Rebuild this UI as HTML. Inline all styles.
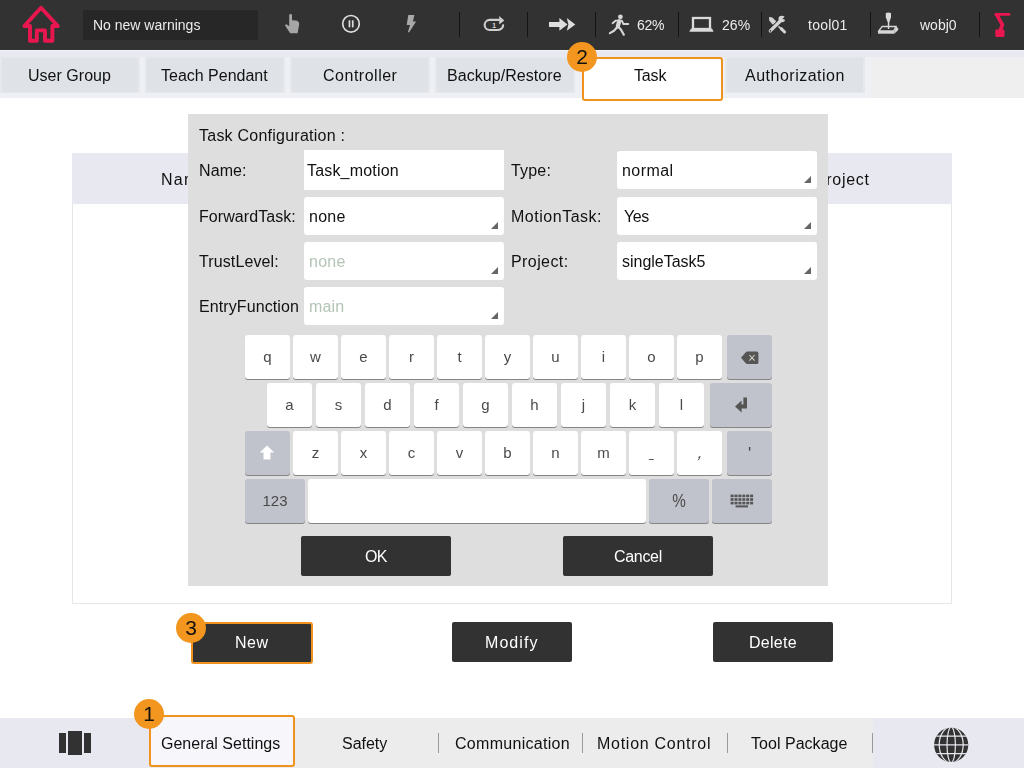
<!DOCTYPE html>
<html lang="en"><head><meta charset="utf-8"><title>Task Configuration</title>
<style>
html,body{margin:0;padding:0;}
body{width:1024px;height:768px;position:relative;overflow:hidden;background:#fff;font-family:"Liberation Sans", sans-serif;font-size:15px;color:#111;}
.abs{position:absolute;}
.t{position:absolute;white-space:nowrap;line-height:20px;height:20px;will-change:transform;}
.sep{position:absolute;width:1px;background:#141414;top:12px;height:25px;}
.tab{position:absolute;top:57px;height:36px;width:140px;background:#dfe3e8;box-sizing:border-box;border:2px solid #e5e8ed;border-top-width:1px;border-bottom-width:1px;}
.key{position:absolute;height:44px;width:45px;background:#fff;border-radius:3px;box-shadow:0 1px 0 #858585;}
.key.g{background:#c0c2cc;}
.kl{position:absolute;left:0;right:0;top:0;height:44px;line-height:44px;text-align:center;font-size:15px;color:#4a4a4a;will-change:transform;}
.inp{position:absolute;background:#fff;width:200px;}
.sel{position:absolute;background:#fff;width:200px;height:38px;border-radius:3px;}
.sel:after{content:"";position:absolute;right:6px;bottom:6px;width:0;height:0;border-left:7.5px solid transparent;border-bottom:7px solid #666;}
.btn{position:absolute;background:#323232;border-radius:2px;height:40px;}
.badge{position:absolute;width:30px;height:30px;border-radius:50%;background:#f2961f;color:#111;will-change:transform;font-size:21px;line-height:30px;text-align:center;}
.bsep{position:absolute;width:1px;background:#9a9a9a;top:733px;height:20px;}
</style></head><body>

<div class="abs" style="left:0;top:0;width:1024px;height:50px;background:#323232"></div>
<div class="abs" style="left:83px;top:10px;width:175px;height:30px;background:#272727"></div>
<svg class="abs" style="left:20px;top:3px" width="44" height="44" viewBox="0 0 44 44">
<path d="M16.8,37.7 H10 V23 H4.4 L21,4.8 L37.8,23 H32.4 V37.7 H25 V27.4 H16.8 Z" fill="none" stroke="#e9174f" stroke-width="3.9" stroke-linejoin="round" stroke-linecap="round"/>
</svg>
<div class="sep" style="left:459px"></div>
<div class="sep" style="left:527px"></div>
<div class="sep" style="left:595px"></div>
<div class="sep" style="left:678px"></div>
<div class="sep" style="left:761px"></div>
<div class="sep" style="left:870px"></div>
<div class="sep" style="left:979px"></div>
<svg class="abs" style="left:283px;top:12px" width="20" height="24" viewBox="0 0 20 24">
<path d="M6.2,3.2 Q6.2,2 7.6,2 Q9,2 9,3.2 V8.2 L13,8.6 Q16.5,9.6 16.2,12.2 L14.6,21.2 H7.2 L2.2,13.8 Q1.7,12.2 3.5,12.3 L6.2,14.2 Z" fill="#a6a6a6"/>
</svg>
<svg class="abs" style="left:339px;top:12px" width="24" height="24" viewBox="0 0 24 24">
<circle cx="12" cy="11.8" r="8.3" fill="none" stroke="#dcdcdc" stroke-width="1.7"/>
<rect x="9.6" y="8.3" width="1.7" height="7" fill="#dcdcdc"/><rect x="12.9" y="8.3" width="1.7" height="7" fill="#dcdcdc"/>
</svg>
<svg class="abs" style="left:403px;top:13px" width="16" height="22" viewBox="0 0 16 22">
<path d="M5.3,2 H11.4 L9.9,8.6 H13.1 L6.2,19.3 H4.9 L7,12 H3.7 Z" fill="#a8a8a8"/>
</svg>
<svg class="abs" style="left:481px;top:13px" width="26" height="22" viewBox="0 0 26 22">
<path d="M18.5,6.9 H8.7 A5.05,5.05 0 0 0 8.7,17 H17.1 A5.05,5.05 0 0 0 22.1,11.4" fill="none" stroke="#cfcfcf" stroke-width="2.1"/>
<path d="M18.2,3.1 L23.3,7.4 L18.2,11.4 Z" fill="#cfcfcf"/>
<text x="13.2" y="14.8" font-family="Liberation Sans, sans-serif" font-size="7.5" font-weight="bold" fill="#cfcfcf" text-anchor="middle">1</text>
</svg>
<svg class="abs" style="left:547px;top:15px" width="30" height="18" viewBox="0 0 30 18">
<path d="M2,7 H12.4 V3 L20.5,9.4 L12.4,15.8 V11.9 H2 Z" fill="#dedede"/>
<path d="M19.8,3 L28.3,9.4 L19.8,15.8 L21.4,9.4 Z" fill="#dedede"/>
</svg>
<svg class="abs" style="left:606px;top:12px" width="26" height="26" viewBox="0 0 26 26">
<circle cx="14.4" cy="4.8" r="2.4" fill="#d6d6d6"/>
<path d="M6.6,11.2 L9.8,8.6 H15.8 L17.4,12 H22.2" fill="none" stroke="#d6d6d6" stroke-width="1.9" stroke-linecap="round" stroke-linejoin="round"/>
<path d="M13.2,9.2 L11.8,14.4" fill="none" stroke="#d6d6d6" stroke-width="4.2" stroke-linecap="round"/>
<path d="M11.4,15 L8,18.8 L3.9,21.1" fill="none" stroke="#d6d6d6" stroke-width="2.2" stroke-linecap="round" stroke-linejoin="round"/>
<path d="M12.2,14.4 L15.2,18 L17.8,22.7" fill="none" stroke="#d6d6d6" stroke-width="2.2" stroke-linecap="round" stroke-linejoin="round"/>
</svg>
<svg class="abs" style="left:687px;top:15px" width="30" height="20" viewBox="0 0 30 20">
<rect x="6" y="3" width="17" height="11" fill="none" stroke="#dadada" stroke-width="2.3"/>
<path d="M4,13.6 H25 L26.6,16.7 H2.3 Z" fill="#dadada"/>
</svg>
<svg class="abs" style="left:765px;top:13px" width="24" height="24" viewBox="0 0 24 24">
<path d="M4,4 L7.4,4.4 L11.4,8.4 L8,12 L4.2,7.6 Z" fill="#d4d4d4"/>
<path d="M9.2,9.4 L19.4,19" stroke="#d4d4d4" stroke-width="1.5" stroke-linecap="round" fill="none"/>
<path d="M16.2,15.6 L19.6,19" stroke="#d4d4d4" stroke-width="3" stroke-linecap="round" fill="none"/>
<path d="M5.3,17.9 L16.6,6.8" stroke="#323232" stroke-width="5" stroke-linecap="butt" fill="none"/><path d="M5.3,17.9 L16.6,6.8" stroke="#d4d4d4" stroke-width="3.3" stroke-linecap="round" fill="none"/>
<circle cx="16.8" cy="6" r="3.3" fill="#d4d4d4"/>
<path d="M17.4,5.8 L21,2.8 L21.4,7.4 Z" fill="#323232"/>
<circle cx="5.4" cy="17.9" r="0.8" fill="#323232"/>
</svg>
<svg class="abs" style="left:875px;top:11px" width="26" height="26" viewBox="0 0 26 26">
<path d="M10.8,1.9 Q13.4,1.2 16,1.9 V6.6 L14.3,11 H12.7 L10.8,6.6 Z" fill="#dadada"/>
<rect x="12.8" y="10" width="1.5" height="8" fill="#dadada"/>
<path d="M7.2,15.5 H21 L18.6,19.8 H3.8 Z" fill="none" stroke="#d6d6d6" stroke-width="1.3"/>
<path d="M3,20 H19.4 V22.7 H3 Z" fill="#d6d6d6"/>
<path d="M21.2,15.2 L23.2,17.4 V19 L19.4,22.7 V20 Z" fill="#d6d6d6"/>
</svg>
<svg class="abs" style="left:990px;top:10px" width="24" height="30" viewBox="0 0 24 30">
<rect x="4.5" y="2.9" width="15.8" height="2.9" rx="1" fill="#ea1650"/>
<path d="M6.9,4.8 L12.4,14.8 L10.2,20.4" fill="none" stroke="#ea1650" stroke-width="3.7" stroke-linejoin="round" stroke-linecap="round"/>
<rect x="5.3" y="19.4" width="9.2" height="7.5" rx="1.2" fill="#ea1650"/>
</svg>
<span class="t" id="t0" style="left:92.67px;top:15.00px;font-size:14px;color:#ececec;letter-spacing:0.00px;">No new warnings</span>
<span class="t" id="t1" style="left:636.81px;top:15.00px;font-size:14px;color:#ececec;letter-spacing:-0.28px;">62%</span>
<span class="t" id="t2" style="left:721.55px;top:15.00px;font-size:14px;color:#ececec;letter-spacing:0.04px;">26%</span>
<span class="t" id="t3" style="left:808.20px;top:15.00px;font-size:14px;color:#ececec;letter-spacing:0.24px;">tool01</span>
<span class="t" id="t4" style="left:919.81px;top:15.00px;font-size:14px;color:#ececec;letter-spacing:-0.01px;">wobj0</span>
<div class="abs" style="left:0;top:50px;width:1024px;height:48px;background:#efefef"></div>
<div class="abs" style="left:0;top:50px;width:1024px;height:7px;background:#e8e8f0;border-top:1px solid #f4f4f8;box-sizing:border-box"></div>
<div class="abs" style="left:0;top:57px;width:871px;height:41px;background:#eef0f4"></div>
<div class="tab" style="left:0px"></div>
<div class="tab" style="left:145px"></div>
<div class="tab" style="left:290px"></div>
<div class="tab" style="left:435px"></div>
<div class="tab" style="left:725px"></div>
<div class="abs" style="left:582px;top:57px;width:137px;height:40px;background:#fff;border:2px solid #f0921d;border-radius:3px"></div>
<div class="badge" style="left:567px;top:42px">2</div>
<span class="t" id="t5" style="left:27.62px;top:66.00px;font-size:16px;color:#111;letter-spacing:0.02px;">User Group</span>
<span class="t" id="t6" style="left:160.81px;top:66.00px;font-size:16px;color:#111;letter-spacing:-0.01px;">Teach Pendant</span>
<span class="t" id="t7" style="left:322.90px;top:66.00px;font-size:16px;color:#111;letter-spacing:0.51px;">Controller</span>
<span class="t" id="t8" style="left:446.73px;top:66.00px;font-size:16px;color:#111;letter-spacing:0.06px;">Backup/Restore</span>
<span class="t" id="t9" style="left:633.72px;top:66.00px;font-size:16px;color:#111;letter-spacing:-0.15px;">Task</span>
<span class="t" id="t10" style="left:745.10px;top:66.00px;font-size:16px;color:#111;letter-spacing:0.50px;">Authorization</span>
<div class="abs" style="left:72px;top:153px;width:878px;height:449px;border:1px solid #e6e6e6;background:#fff"></div>
<div class="abs" style="left:72px;top:153px;width:880px;height:51px;background:#e8e8f0"></div>
<span class="t" id="t11" style="left:161.05px;top:170.00px;font-size:16px;color:#111;letter-spacing:1.27px;">Name</span>
<span class="t" id="t12" style="left:385.54px;top:170.00px;font-size:16px;color:#111;letter-spacing:-0.65px;">Type</span>
<span class="t" id="t13" style="left:578.71px;top:170.00px;font-size:16px;color:#111;letter-spacing:0.51px;">MotionTask</span>
<span class="t" id="t14" style="left:815.11px;top:170.00px;font-size:16px;color:#111;letter-spacing:0.68px;">Project</span>
<div class="abs" style="left:188px;top:114px;width:640px;height:472px;background:#dedede"></div>
<span class="t" id="t15" style="left:199.04px;top:126.00px;font-size:16px;color:#111;letter-spacing:0.24px;">Task Configuration :</span>
<div class="inp" style="left:304px;top:150px;height:40px"></div>
<div class="sel" style="left:304px;top:197px"></div>
<div class="sel" style="left:304px;top:242px"></div>
<div class="sel" style="left:304px;top:287px"></div>
<div class="sel" style="left:617px;top:151px"></div>
<div class="sel" style="left:617px;top:197px"></div>
<div class="sel" style="left:617px;top:242px"></div>
<span class="t" id="t16" style="left:198.55px;top:161.00px;font-size:16px;color:#111;letter-spacing:0.10px;">Name:</span>
<span class="t" id="t17" style="left:198.70px;top:207.00px;font-size:16px;color:#111;letter-spacing:0.07px;">ForwardTask:</span>
<span class="t" id="t18" style="left:199.31px;top:252.00px;font-size:16px;color:#111;letter-spacing:0.11px;">TrustLevel:</span>
<span class="t" id="t19" style="left:198.69px;top:297.00px;font-size:16px;color:#111;letter-spacing:0.10px;">EntryFunction</span>
<span class="t" id="t20" style="left:511.34px;top:161.00px;font-size:16px;color:#111;letter-spacing:0.18px;">Type:</span>
<span class="t" id="t21" style="left:510.60px;top:207.00px;font-size:16px;color:#111;letter-spacing:0.52px;">MotionTask:</span>
<span class="t" id="t22" style="left:510.57px;top:252.00px;font-size:16px;color:#111;letter-spacing:0.41px;">Project:</span>
<span class="t" id="t23" style="left:307.36px;top:161.00px;font-size:16px;color:#111;letter-spacing:0.18px;">Task_motion</span>
<span class="t" id="t24" style="left:309.05px;top:207.00px;font-size:16px;color:#111;letter-spacing:0.26px;">none</span>
<span class="t" id="t25" style="left:309.05px;top:252.00px;font-size:16px;color:#b4c4b6;letter-spacing:0.26px;">none</span>
<span class="t" id="t26" style="left:309.00px;top:297.00px;font-size:16px;color:#b4c4b6;letter-spacing:0.13px;">main</span>
<span class="t" id="t27" style="left:621.84px;top:161.00px;font-size:16px;color:#111;letter-spacing:0.45px;">normal</span>
<span class="t" id="t28" style="left:624.24px;top:207.00px;font-size:16px;color:#111;letter-spacing:-0.44px;">Yes</span>
<span class="t" id="t29" style="left:622.08px;top:252.00px;font-size:16px;color:#111;letter-spacing:-0.01px;">singleTask5</span>
<div class="key" style="left:245px;top:335px;width:45px"><span class="kl">q</span></div>
<div class="key" style="left:293px;top:335px;width:45px"><span class="kl">w</span></div>
<div class="key" style="left:341px;top:335px;width:45px"><span class="kl">e</span></div>
<div class="key" style="left:389px;top:335px;width:45px"><span class="kl">r</span></div>
<div class="key" style="left:437px;top:335px;width:45px"><span class="kl">t</span></div>
<div class="key" style="left:485px;top:335px;width:45px"><span class="kl">y</span></div>
<div class="key" style="left:533px;top:335px;width:45px"><span class="kl">u</span></div>
<div class="key" style="left:581px;top:335px;width:45px"><span class="kl">i</span></div>
<div class="key" style="left:629px;top:335px;width:45px"><span class="kl">o</span></div>
<div class="key" style="left:677px;top:335px;width:45px"><span class="kl">p</span></div>
<div class="key g" style="left:727px;top:335px;width:45px"><svg class="abs" style="left:12px;top:15px" width="22" height="16" viewBox="0 0 22 16"><path d="M8.2,1.6 H17.8 Q19.4,1.6 19.4,3.2 V12.4 Q19.4,14 17.8,14 H8.2 Q7.4,14 6.8,13.3 L2,7.8 L6.8,2.3 Q7.4,1.6 8.2,1.6 Z" fill="#555"/><path d="M10.4,5 L15.6,10.6 M15.6,5 L10.4,10.6" stroke="#d8d4c8" stroke-width="1.1" fill="none"/></svg></div>
<div class="key" style="left:267px;top:383px;width:45px"><span class="kl">a</span></div>
<div class="key" style="left:316px;top:383px;width:45px"><span class="kl">s</span></div>
<div class="key" style="left:365px;top:383px;width:45px"><span class="kl">d</span></div>
<div class="key" style="left:414px;top:383px;width:45px"><span class="kl">f</span></div>
<div class="key" style="left:463px;top:383px;width:45px"><span class="kl">g</span></div>
<div class="key" style="left:512px;top:383px;width:45px"><span class="kl">h</span></div>
<div class="key" style="left:561px;top:383px;width:45px"><span class="kl">j</span></div>
<div class="key" style="left:610px;top:383px;width:45px"><span class="kl">k</span></div>
<div class="key" style="left:659px;top:383px;width:45px"><span class="kl">l</span></div>
<div class="key g" style="left:710px;top:383px;width:62px"><svg class="abs" style="left:22px;top:12px" width="18" height="20" viewBox="0 0 18 20"><path d="M11.4,2.6 H15 V13.6 H9.6 V17.6 L3,11.4 L9.6,5.4 V9.6 H11.4 Z" fill="#555"/></svg></div>
<div class="key g" style="left:245px;top:431px;width:45px"><svg class="abs" style="left:12px;top:12px" width="20" height="20" viewBox="0 0 20 20"><path d="M10,2.4 L17.3,9.6 H13.5 V16.4 H6.5 V9.6 H2.7 Z" fill="#fff"/></svg></div>
<div class="key" style="left:293px;top:431px;width:45px"><span class="kl">z</span></div>
<div class="key" style="left:341px;top:431px;width:45px"><span class="kl">x</span></div>
<div class="key" style="left:389px;top:431px;width:45px"><span class="kl">c</span></div>
<div class="key" style="left:437px;top:431px;width:45px"><span class="kl">v</span></div>
<div class="key" style="left:485px;top:431px;width:45px"><span class="kl">b</span></div>
<div class="key" style="left:533px;top:431px;width:45px"><span class="kl">n</span></div>
<div class="key" style="left:581px;top:431px;width:45px"><span class="kl">m</span></div>
<div class="key" style="left:629px;top:431px;width:45px"><span class="kl"><span style="display:inline-block;transform:scaleX(.55);position:relative;top:-1px">_</span></span></div>
<div class="key" style="left:677px;top:431px;width:45px"><span class="kl"><span style="display:inline-block;transform:skewX(-18deg) scale(1.15);position:relative;top:-1px;left:2px">,</span></span></div>
<div class="key g" style="left:727px;top:431px;width:45px"><span class="kl"><span style="position:relative;top:1px;left:0px;font-size:17px">'</span></span></div>
<div class="key g" style="left:245px;top:479px;width:60px"><span class="kl">123</span></div>
<div class="key" style="left:308px;top:479px;width:338px"></div>
<div class="key g" style="left:649px;top:479px;width:60px"><span class="kl"><span style="font-size:18px;display:inline-block;transform:scaleX(.85)">%</span></span></div>
<div class="key g" style="left:712px;top:479px;width:60px"><svg class="abs" style="left:17px;top:14px" width="26" height="16" viewBox="0 0 26 16"><rect x="1.6" y="1.6" width="3" height="2.6" fill="#555"/><rect x="5.5" y="1.6" width="3" height="2.6" fill="#555"/><rect x="9.4" y="1.6" width="3" height="2.6" fill="#555"/><rect x="13.3" y="1.6" width="3" height="2.6" fill="#555"/><rect x="17.2" y="1.6" width="3" height="2.6" fill="#555"/><rect x="21.1" y="1.6" width="3" height="2.6" fill="#555"/><rect x="1.6" y="5.2" width="3" height="2.6" fill="#555"/><rect x="5.5" y="5.2" width="3" height="2.6" fill="#555"/><rect x="9.4" y="5.2" width="3" height="2.6" fill="#555"/><rect x="13.3" y="5.2" width="3" height="2.6" fill="#555"/><rect x="17.2" y="5.2" width="3" height="2.6" fill="#555"/><rect x="21.1" y="5.2" width="3" height="2.6" fill="#555"/><rect x="1.6" y="8.8" width="3" height="2.6" fill="#555"/><rect x="5.5" y="8.8" width="3" height="2.6" fill="#555"/><rect x="9.4" y="8.8" width="3" height="2.6" fill="#555"/><rect x="13.3" y="8.8" width="3" height="2.6" fill="#555"/><rect x="17.2" y="8.8" width="3" height="2.6" fill="#555"/><rect x="21.1" y="8.8" width="3" height="2.6" fill="#555"/><rect x="6.6" y="12.4" width="12.4" height="2" fill="#555"/></svg></div>
<div class="btn" style="left:301px;top:536px;width:150px"></div>
<div class="btn" style="left:563px;top:536px;width:150px"></div>
<span class="t" id="t30" style="left:364.91px;top:547.00px;font-size:16px;color:#fff;letter-spacing:-0.80px;">OK</span>
<span class="t" id="t31" style="left:613.82px;top:547.00px;font-size:16px;color:#fff;letter-spacing:-0.31px;">Cancel</span>
<div class="abs" style="left:191px;top:622px;width:118px;height:38px;background:#323232;border:2px solid #f0921d;border-radius:3px"></div>
<div class="btn" style="left:452px;top:622px;width:120px"></div>
<div class="btn" style="left:713px;top:622px;width:120px"></div>
<span class="t" id="t32" style="left:234.69px;top:633.00px;font-size:16px;color:#fff;letter-spacing:0.51px;">New</span>
<span class="t" id="t33" style="left:485.35px;top:633.00px;font-size:16px;color:#fff;letter-spacing:1.07px;">Modify</span>
<span class="t" id="t34" style="left:748.63px;top:633.00px;font-size:16px;color:#fff;letter-spacing:0.26px;">Delete</span>
<div class="badge" style="left:176px;top:613px">3</div>
<div class="abs" style="left:0;top:718px;width:1024px;height:50px;background:#ececec"></div>
<div class="abs" style="left:0;top:718px;width:150px;height:50px;background:#e8e8f0"></div>
<div class="abs" style="left:873px;top:718px;width:151px;height:50px;background:#e8e8f0"></div>
<div class="abs" style="left:149px;top:715px;width:142px;height:48px;background:#f6f6fb;border:2px solid #f0921d;border-radius:3px"></div>
<div class="badge" style="left:134px;top:699px">1</div>
<div class="abs" style="left:59px;top:733px;width:7px;height:20px;background:#323232"></div>
<div class="abs" style="left:68px;top:730.5px;width:14px;height:24.5px;background:#323232"></div>
<div class="abs" style="left:84px;top:733px;width:7px;height:20px;background:#323232"></div>
<div class="bsep" style="left:438px"></div>
<div class="bsep" style="left:582px"></div>
<div class="bsep" style="left:727px"></div>
<div class="bsep" style="left:872px"></div>
<span class="t" id="t35" style="left:161.47px;top:734.00px;font-size:16px;color:#111;letter-spacing:0.00px;">General Settings</span>
<span class="t" id="t36" style="left:342.28px;top:734.00px;font-size:16px;color:#111;letter-spacing:-0.03px;">Safety</span>
<span class="t" id="t37" style="left:455.32px;top:734.00px;font-size:16px;color:#111;letter-spacing:0.29px;">Communication</span>
<span class="t" id="t38" style="left:597.45px;top:734.00px;font-size:16px;color:#111;letter-spacing:0.73px;">Motion Control</span>
<span class="t" id="t39" style="left:750.86px;top:734.00px;font-size:16px;color:#111;letter-spacing:0.03px;">Tool Package</span>
<svg class="abs" style="left:932px;top:725px" width="40" height="40" viewBox="0 0 40 40">
<defs><clipPath id="gc"><circle cx="19.2" cy="19.85" r="17.1"/></clipPath></defs>
<circle cx="19.2" cy="19.85" r="17.1" fill="#323232"/>
<g clip-path="url(#gc)" fill="none" stroke="#e8e8f0" stroke-width="1.2">
<ellipse cx="19.2" cy="19.85" rx="4.2" ry="17.6"/>
<ellipse cx="19.2" cy="19.85" rx="12" ry="17.9"/>
<line x1="0" y1="19.85" x2="40" y2="19.85"/>
<line x1="0" y1="11.1" x2="40" y2="11.1"/>
<line x1="0" y1="28.6" x2="40" y2="28.6"/>
</g></svg>
</body></html>
